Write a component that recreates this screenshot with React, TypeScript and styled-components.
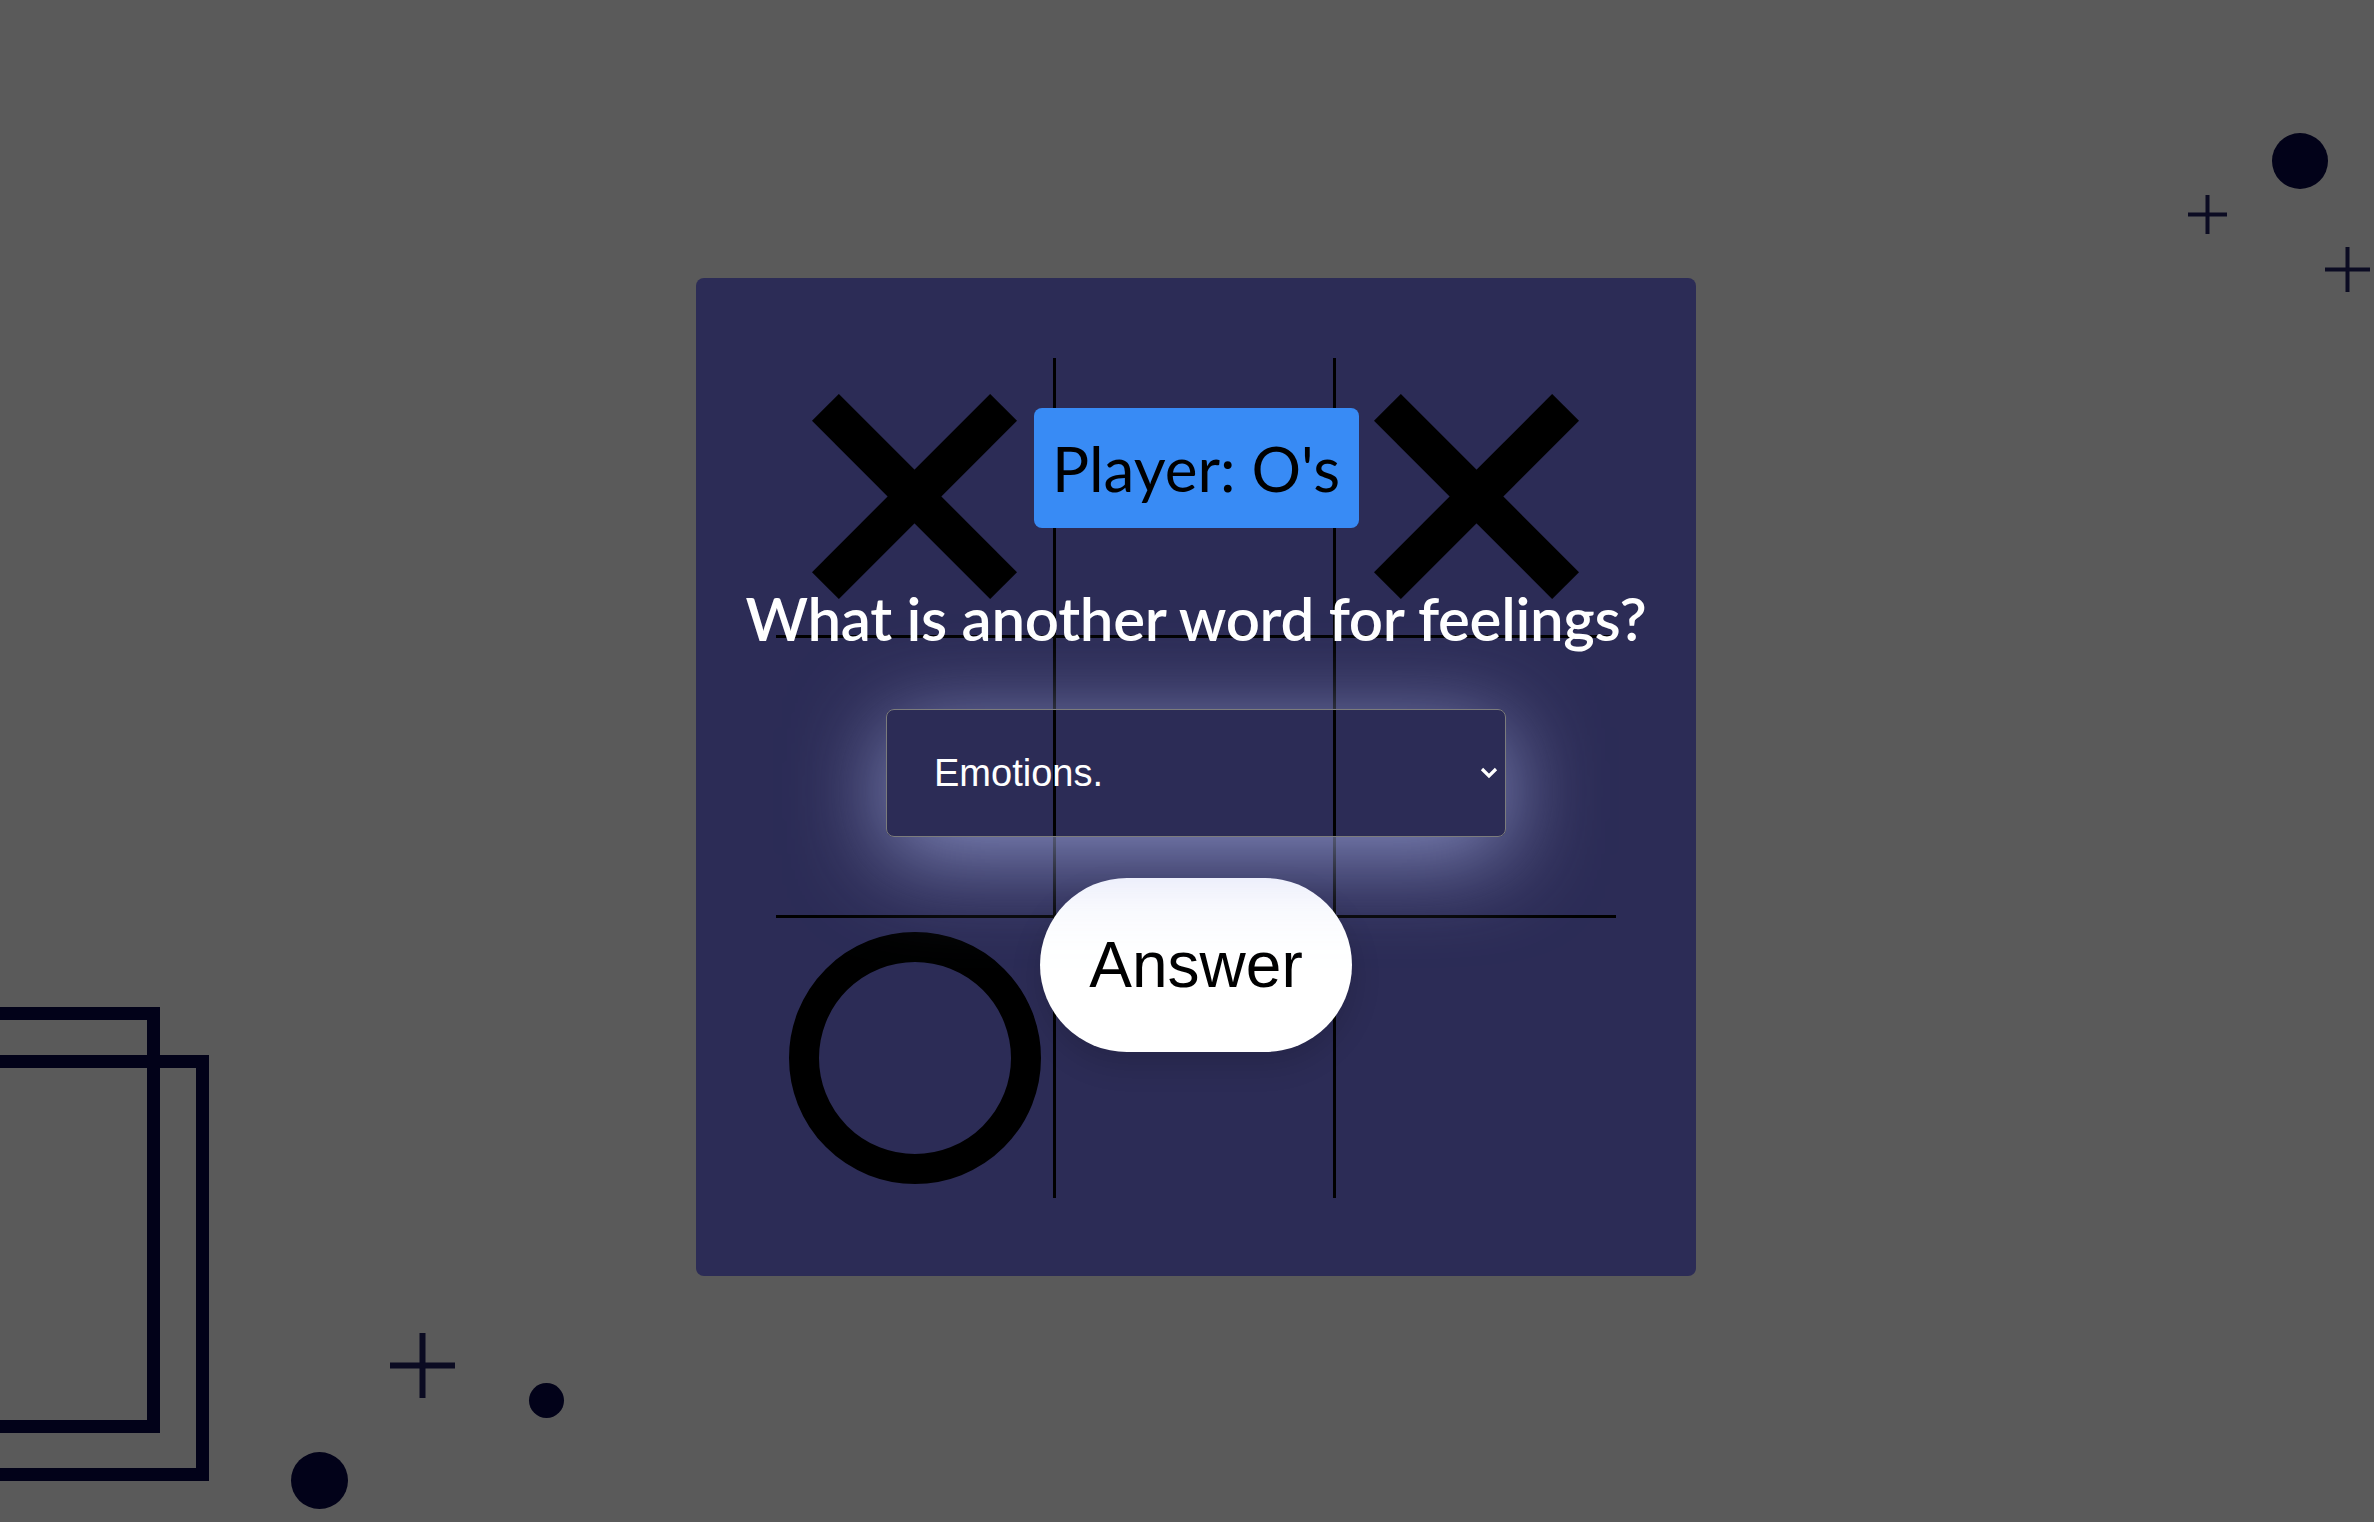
import React from "react";
import styled, { createGlobalStyle } from "styled-components";

const GlobalStyle = createGlobalStyle`
  * { box-sizing: border-box; }
  html, body { margin: 0; padding: 0; }
  body {
    background: #5a5a5a;
    font-family: Lato, "Noto Sans", sans-serif;
    overflow: hidden;
  }
`;

const Page = styled.div`
  position: relative;
  width: 100vw;
  height: 100vh;
  overflow: hidden;
  background: #5a5a5a;
  display: flex;
  align-items: center;
  justify-content: center;
  padding: 32px 0 0 18px;
`;

const Dot = styled.span<{ $x: number; $y: number; $size: number }>`
  position: absolute;
  left: ${(p) => p.$x}px;
  top: ${(p) => p.$y}px;
  width: ${(p) => p.$size}px;
  height: ${(p) => p.$size}px;
  border-radius: 50%;
  background: #020219;
`;

const Frame = styled.span<{ $x: number; $y: number }>`
  position: absolute;
  left: ${(p) => p.$x}px;
  top: ${(p) => p.$y}px;
  width: 400px;
  height: 426px;
  border: 13px solid #020219;
`;

const PlusSvg = styled.svg<{ $x: number; $y: number }>`
  position: absolute;
  left: ${(p) => p.$x}px;
  top: ${(p) => p.$y}px;
`;

const Plus = ({ x, y, size, stroke }: { x: number; y: number; size: number; stroke: number }) => (
  <PlusSvg $x={x} $y={y} width={size} height={size} viewBox={`0 0 ${size} ${size}`}>
    <line x1={size / 2} y1={0} x2={size / 2} y2={size} stroke="#0b0b22" strokeWidth={stroke} strokeLinecap="round" />
    <line x1={0} y1={size / 2} x2={size} y2={size / 2} stroke="#0b0b22" strokeWidth={stroke} strokeLinecap="round" />
  </PlusSvg>
);

const Modal = styled.div`
  position: relative;
  width: 1000px;
  height: 998px;
  flex-shrink: 0;
  background: #2c2c56;
  border-radius: 8px;
  padding: 80px;
`;

const Board = styled.div`
  display: grid;
  grid-template-columns: repeat(3, 280px);
  grid-template-rows: repeat(3, 280px);
`;

const Cell = styled.div<{ $right?: boolean; $bottom?: boolean }>`
  display: flex;
  align-items: center;
  justify-content: center;
  border-right: ${(p) => (p.$right ? "3px solid #000" : "none")};
  border-bottom: ${(p) => (p.$bottom ? "3px solid #000" : "none")};
`;

const Ring = styled.div`
  width: 252px;
  height: 252px;
  border-radius: 50%;
  border: 30px solid #000;
`;

const XMark = () => (
  <svg width="205" height="205" viewBox="0 0 205 205">
    <line x1="13.4" y1="13.4" x2="191.6" y2="191.6" stroke="#000" strokeWidth="38" />
    <line x1="191.6" y1="13.4" x2="13.4" y2="191.6" stroke="#000" strokeWidth="38" />
  </svg>
);

const Overlay = styled.div`
  position: absolute;
  inset: 0;
  display: flex;
  flex-direction: column;
  align-items: center;
  padding-top: 130px;
`;

const Badge = styled.div`
  width: 325px;
  height: 120px;
  display: flex;
  align-items: center;
  justify-content: center;
  background: #388bf5;
  border-radius: 8px;
  color: #000;
  font-family: Lato, "Noto Sans", sans-serif;
  font-weight: 400;
  font-size: 62px;
  line-height: 1;
`;

const Question = styled.h2`
  margin: 60px 0 0;
  color: #fff;
  font-family: Lato, "Noto Sans", sans-serif;
  font-weight: 600;
  font-size: 60px;
  line-height: 1;
  letter-spacing: -0.3px;
  white-space: nowrap;
`;

const SelectWrap = styled.div`
  position: relative;
  margin-top: 61px;
  width: 620px;
  height: 128px;
  border-radius: 8px;
  box-shadow: 0 18px 95px rgba(175, 185, 240, 0.72);
`;

const Select = styled.select`
  appearance: none;
  -webkit-appearance: none;
  width: 100%;
  height: 100%;
  background: transparent;
  border: 1.5px solid #7c7c7c;
  border-radius: 8px;
  color: #fff;
  font-family: "Liberation Sans", Arial, sans-serif;
  font-size: 38px;
  padding: 0 40px 0 47px;
  outline: none;
  option {
    background: #2c2c56;
    color: #fff;
  }
`;

const Chevron = styled.svg`
  position: absolute;
  right: 8px;
  top: 50%;
  transform: translateY(-50%);
  pointer-events: none;
`;

const AnswerButton = styled.button`
  margin-top: 41px;
  width: 312px;
  height: 174px;
  border: none;
  border-radius: 87px;
  background: #fff;
  color: #000;
  font-family: "Liberation Sans", Arial, sans-serif;
  font-size: 64px;
  cursor: pointer;
  box-shadow: 0 12px 30px rgba(0, 0, 0, 0.15);
`;

export default function App() {
  return (
    <>
      <GlobalStyle />
      <Page>
        <Frame $x={-240} $y={1007} />
        <Frame $x={-191} $y={1055} />
        <Plus x={390} y={1333} size={65} stroke={6} />
        <Dot $x={529} $y={1383} $size={35} />
        <Dot $x={291} $y={1452} $size={57} />
        <Dot $x={2272} $y={133} $size={56} />
        <Plus x={2188} y={195} size={39} stroke={4} />
        <Plus x={2325} y={247} size={45} stroke={4} />

        <Modal>
          <Board>
            <Cell $right $bottom>
              <XMark />
            </Cell>
            <Cell $right $bottom />
            <Cell $bottom>
              <XMark />
            </Cell>
            <Cell $right $bottom />
            <Cell $right $bottom />
            <Cell $bottom />
            <Cell $right>
              <Ring />
            </Cell>
            <Cell $right />
            <Cell />
          </Board>

          <Overlay>
            <Badge>Player: O's</Badge>
            <Question>What is another word for feelings?</Question>
            <SelectWrap>
              <Select defaultValue="Emotions.">
                <option>Emotions.</option>
                <option>Thoughts.</option>
                <option>Actions.</option>
              </Select>
              <Chevron width="18" height="12" viewBox="0 0 18 12">
                <polyline points="2,2 9,9 16,2" fill="none" stroke="#fff" strokeWidth="3.2" />
              </Chevron>
            </SelectWrap>
            <AnswerButton>Answer</AnswerButton>
          </Overlay>
        </Modal>
      </Page>
    </>
  );
}
